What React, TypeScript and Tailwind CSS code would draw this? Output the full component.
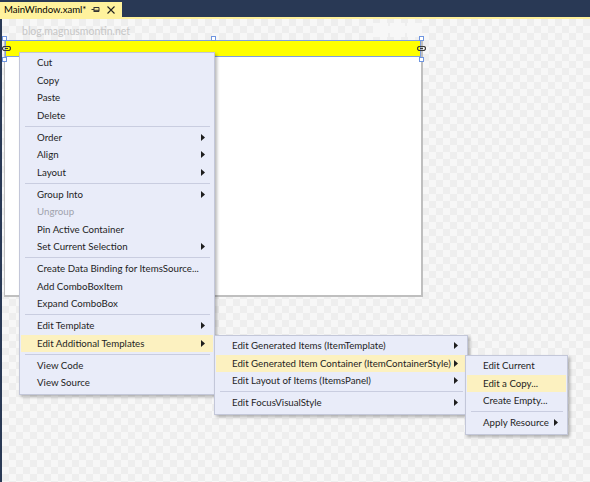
import { FC } from 'react';

type MenuEntry =
    | { sep: true }
    | { label: string; arrow?: boolean; disabled?: boolean; active?: boolean; sep?: false };

const mainItems: MenuEntry[] = [
    { label: 'Cut' },
    { label: 'Copy' },
    { label: 'Paste' },
    { label: 'Delete' },
    { sep: true },
    { label: 'Order', arrow: true },
    { label: 'Align', arrow: true },
    { label: 'Layout', arrow: true },
    { sep: true },
    { label: 'Group Into', arrow: true },
    { label: 'Ungroup', disabled: true },
    { label: 'Pin Active Container' },
    { label: 'Set Current Selection', arrow: true },
    { sep: true },
    { label: 'Create Data Binding for ItemsSource...' },
    { label: 'Add ComboBoxItem' },
    { label: 'Expand ComboBox' },
    { sep: true },
    { label: 'Edit Template', arrow: true },
    { label: 'Edit Additional Templates', arrow: true, active: true },
    { sep: true },
    { label: 'View Code' },
    { label: 'View Source' },
];

const templateItems: MenuEntry[] = [
    { label: 'Edit Generated Items (ItemTemplate)', arrow: true },
    { label: 'Edit Generated Item Container (ItemContainerStyle)', arrow: true, active: true },
    { label: 'Edit Layout of Items (ItemsPanel)', arrow: true },
    { sep: true },
    { label: 'Edit FocusVisualStyle', arrow: true },
];

const styleItems: MenuEntry[] = [
    { label: 'Edit Current' },
    { label: 'Edit a Copy...', active: true },
    { label: 'Create Empty...' },
    { sep: true },
    { label: 'Apply Resource', arrow: true },
];

const Arrow = () => (
    <svg width="4" height="7" viewBox="0 0 4 7" className="shrink-0">
        <path d="M0 0 L4 3.5 L0 7 Z" fill="#1e1e1e" />
    </svg>
);

interface MenuProps {
    items: MenuEntry[];
    className: string;
}

const Menu: FC<MenuProps> = ({ items, className }) => {
    return (
        <div className={`absolute bg-[#e9ecf9] border border-[#c3c7d9] shadow-[2px_2px_3px_rgba(0,0,0,0.28)] pb-[2px] pt-[1px] ${className}`}>
            {items.map((item, key) => {
                if (item.sep) {
                    return <div key={key} className="h-[4.5px] flex items-center pl-[5px] pr-[4px]">
                        <div className="w-full h-px bg-[#c9cde0]" />
                    </div>
                }
                return <div key={item.label + key}
                    className={`h-[17.5px] mx-[1px] flex items-center pl-[16px] pr-[8px] ${item.active ? 'bg-[#fcf1c0]' : ''}`}>
                    <div className={`flex-1 whitespace-nowrap leading-none pt-px ${item.disabled ? 'text-[#a0a3ad]' : 'text-[#1e1e1e]'}`}>
                        {item.label}
                    </div>
                    {item.arrow && <Arrow />}
                </div>
            })}
        </div>
    );
};

const Handle: FC<{ className: string }> = ({ className }) => (
    <div className={`absolute w-[5px] h-[5px] bg-white border border-[#6f95e0] ${className}`} />
);

const LinkGlyph: FC<{ className: string }> = ({ className }) => (
    <svg width="9" height="5" viewBox="0 0 9 5" className={`absolute ${className}`}>
        <rect x="0.5" y="0.5" width="8" height="4" rx="2" fill="none" stroke="#3a3a3a" strokeWidth="1.2" />
        <path d="M3 2.5 H6" stroke="#3a3a3a" strokeWidth="1" />
    </svg>
);

export default function App() {
    return (
        <div className="w-[590px] h-[482px] relative overflow-hidden flex flex-col bg-[#293955] text-[9.7px] font-['Lato','Liberation_Sans',sans-serif]">
            <div className="h-[17px] flex items-end shrink-0">
                <div className="h-[15px] w-[122px] bg-[#fff29d] flex items-center pl-[4px] pr-[4px]">
                    <span className="text-[9.6px] leading-none text-black">MainWindow.xaml*</span>
                    <svg width="9" height="7" viewBox="0 0 9 7" className="ml-auto mr-[7px]">
                        <path d="M0.5 3.5 H3 M3 1 V6 M3 1.5 H8 M3 5.5 H8 M8 1.5 V5.5 M3 4.3 H8" stroke="#333" strokeWidth="1" fill="none" />
                    </svg>
                    <svg width="8" height="8" viewBox="0 0 8 8" className="mr-[3px]">
                        <path d="M0.5 0.5 L7.5 7.5 M7.5 0.5 L0.5 7.5" stroke="#222" strokeWidth="1.1" />
                    </svg>
                </div>
            </div>
            <div className="h-[2px] bg-[#fff29d] shrink-0" />
            <div className="flex-1 ml-[2px] relative bg-[#f4f4f4] bg-[repeating-conic-gradient(#eeeeee_0%_25%,#f7f7f7_0%_50%)] bg-[length:14px_14px]">
                <div className="absolute left-[20px] top-[7px] text-[#c6c6c6] text-[10.5px] leading-none">blog.magnusmontin.net</div>
                <div className="absolute left-[371px] top-[4px] flex gap-[2px]">
                    <div className="w-[15px] h-[14px] bg-[#f7f7f7]" />
                    <div className="w-[15px] h-[14px] bg-[#f7f7f7]" />
                    <div className="w-[15px] h-[14px] bg-[#f7f7f7]" />
                </div>
                <div className="absolute left-[2px] top-[21px] w-[419px] h-[257px] bg-white border-r-2 border-b-2 border-l border-[#bfbfbf] flex flex-col">
                    <div className="h-[17px] bg-[#ffff00] border border-[#7e9fe0] shrink-0" />
                    <div className="flex-1" />
                    <Handle className="-left-[3px] -top-[4px]" />
                    <Handle className="left-[206px] -top-[4px]" />
                    <Handle className="-right-[3px] -top-[4px]" />
                    <Handle className="-right-[3px] top-[17px]" />
                    <Handle className="-left-[3px] top-[17px]" />
                    <LinkGlyph className="-left-[3px] top-[6px]" />
                    <LinkGlyph className="-right-[5px] top-[6px]" />
                </div>
            </div>

            <Menu items={mainItems} className="left-[19px] top-[52px] w-[196px]" />
            <Menu items={templateItems} className="left-[214px] top-[335px] w-[254px]" />
            <Menu items={styleItems} className="left-[465px] top-[355px] w-[103px]" />
        </div>
    );
}
